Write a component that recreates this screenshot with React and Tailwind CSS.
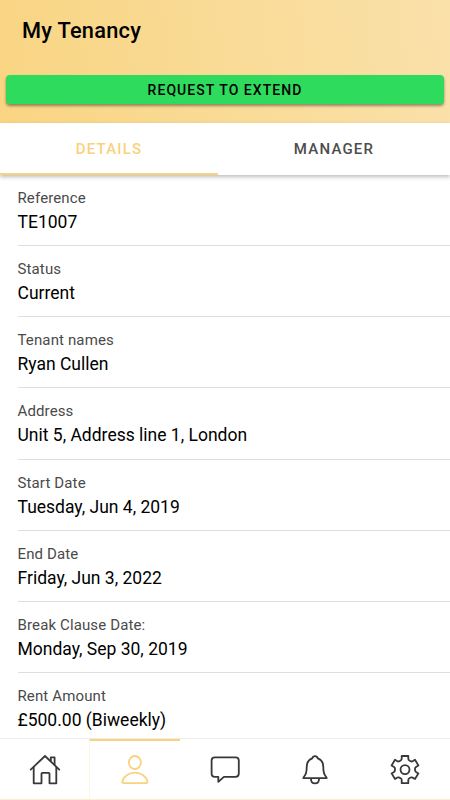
import React, { useState } from "react";

const details = [
  { label: "Reference", value: "TE1007" },
  { label: "Status", value: "Current" },
  { label: "Tenant names", value: "Ryan Cullen" },
  { label: "Address", value: "Unit 5, Address line 1, London" },
  { label: "Start Date", value: "Tuesday, Jun 4, 2019" },
  { label: "End Date", value: "Friday, Jun 3, 2022" },
  { label: "Break Clause Date:", value: "Monday, Sep 30, 2019" },
  { label: "Rent Amount", value: "£500.00 (Biweekly)" },
];

const Icon = ({ children }) => (
  <svg
    width="32"
    height="32"
    viewBox="0 0 32 32"
    fill="none"
    stroke="currentColor"
    strokeWidth="1.8"
    strokeLinecap="round"
    strokeLinejoin="round"
  >
    {children}
  </svg>
);

const HomeIcon = () => (
  <Icon>
    <path d="M1.7 15.6 16 2l14.3 13.6" />
    <path d="M4.7 13.4v15.9h7.8V19.6q0-.8.8-.8h6.4q.8 0 .8.8v9.7h6.8V13.4" />
    <path d="M21.8 7V3.4h3.8v7.2" />
  </Icon>
);

const PersonIcon = () => (
  <Icon>
    <ellipse cx="15.9" cy="8.5" rx="6" ry="6.5" />
    <path d="M3.3 27.8C4.5 22.6 9.5 18.7 15.9 18.7S27.3 22.6 28.5 27.8Q28.6 29.1 27.4 29.1H4.4Q3.2 29.1 3.3 27.8Z" />
  </Icon>
);

const ChatIcon = () => (
  <Icon>
    <path d="M5.9 3.3h20.6q3.3 0 3.3 3.3v12.9q0 3.3-3.3 3.3H14.9l-5.6 5.1v-5.1H5.9q-3.3 0-3.3-3.3V6.6q0-3.3 3.3-3.3Z" />
  </Icon>
);

const BellIcon = () => (
  <Icon>
    <path d="M16 2.2c-1.6 0-2.4.9-2.8 2.2C9.2 5.8 7.7 9 7.7 13c0 5-.6 7.2-2.2 9-.8 1-1.2 1.5-1.2 2.1h23.4c0-.6-.4-1.1-1.2-2.1-1.6-1.8-2.2-4-2.2-9 0-4-1.5-7.2-5.5-8.6-.4-1.3-1.2-2.2-2.8-2.2Z" />
    <path d="M12 24.9c0 2.8 1.7 4.4 4 4.4s4-1.6 4-4.4" />
  </Icon>
);

const CogIcon = () => (
  <Icon>
    <path d="M12.7 2h6.6v2.8q0 1.2 1.1 1.7l1.2.7q1 .6 2 0l2.4-1.4 3.4 5.6-2.4 1.5q-1 .6-1 1.8v1.4q0 1.2 1 1.8l2.4 1.5-3.4 5.6-2.4-1.4q-1-.6-2 0l-1.2.7q-1.1.5-1.1 1.7v3.2h-6.6V26q0-1.2-1.1-1.7l-1.2-.7q-1-.6-2 0L6 25l-3.4-5.6L5 17.9q1-.6 1-1.8v-1.4q0-1.2-1-1.8l-2.4-1.5L6 5.8l2.4 1.4q1 .6 2 0l1.2-.7q1.1-.5 1.1-1.7Z" />
    <circle cx="16" cy="15.6" r="4.5" />
  </Icon>
);

const navItems = [
  { name: "Home", Glyph: HomeIcon },
  { name: "Tenancy", Glyph: PersonIcon },
  { name: "Messages", Glyph: ChatIcon },
  { name: "Notifications", Glyph: BellIcon },
  { name: "Settings", Glyph: CogIcon },
];

const App = () => {
  const [tab, setTab] = useState("Details");
  const [page, setPage] = useState("Tenancy");

  return (
    <div className="flex h-[800px] w-[450px] flex-col overflow-hidden bg-white font-['Roboto',sans-serif] text-black">
      <header className="h-[122.5px] shrink-0 bg-linear-[83deg] from-[#f9d583] to-[#fae1aa] px-1.5 pt-[15px]">
        <h1 className="pl-[16px] text-[21.8px] leading-8 font-medium tracking-[0.25px]">My Tenancy</h1>
        <button
          type="button"
          className="mt-[27.5px] block h-[29.5px] w-full rounded bg-[#2fdb5d] pt-px text-[14px] leading-[28px] font-medium tracking-[1.05px] uppercase shadow-[0_2px_3px_rgba(0,0,0,0.4)]"
        >
          Request to extend
        </button>
      </header>

      <div className="z-10 flex h-[52.5px] shrink-0 bg-white shadow-[0_2px_4px_rgba(0,0,0,0.26)]">
        {["Details", "Manager"].map((name) => (
          <button
            key={name}
            type="button"
            onClick={() => setTab(name)}
            className={`border-b-2 pt-[3px] text-[15px] font-medium tracking-[1.2px] uppercase ${
              name === "Details" ? "w-[218px]" : "flex-1"
            } ${tab === name ? "border-[#f9d27c] text-[#f9d27c]" : "border-transparent text-[#4d4d4d]"}`}
          >
            {name}
          </button>
        ))}
      </div>

      <main className="min-h-0 flex-1 overflow-hidden pl-[17.5px]">
        {details.map((item) => (
          <div key={item.label} className="h-[71.15px] border-b border-[#dedede] pt-[13px]">
            <p className="text-[15px] leading-5 tracking-[0.13px] text-[#4a4a4a]">{item.label}</p>
            <p className="mt-[2px] text-[17.5px] leading-6">{item.value}</p>
          </div>
        ))}
      </main>

      <nav className="grid h-[62.5px] shrink-0 grid-cols-5 border-t border-b border-t-[#ededed] border-b-[#fcedcb] bg-white">
        {navItems.map(({ name, Glyph }) => (
          <button
            key={name}
            type="button"
            aria-label={name}
            onClick={() => setPage(name)}
            className={`flex items-center justify-center border-t-2 ${
              page === name ? "-ml-px border-l border-l-[#fdf6e5] border-t-[#f9d27c] text-[#f9d27c]" : "border-transparent text-[#383838]"
            }`}
          >
            <Glyph />
          </button>
        ))}
      </nav>
    </div>
  );
};

export default App;
